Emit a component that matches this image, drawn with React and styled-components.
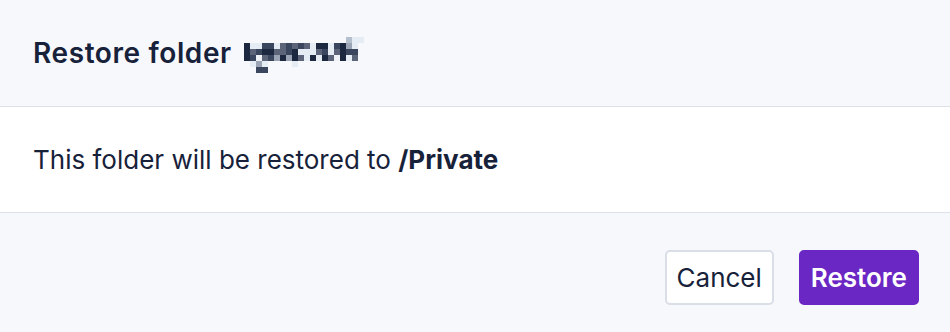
import React from "react";
import styled, { createGlobalStyle } from "styled-components";

const Global = createGlobalStyle`
  html, body { margin: 0; padding: 0; background: #ffffff; }
  body { font-family: Inter, "Noto Sans", sans-serif; color: #17223a; -webkit-font-smoothing: antialiased; }
`;

const Dialog = styled.div`
  width: 950px;
  height: 332px;
  display: flex;
  flex-direction: column;
  background: #f7f8fc;
`;

const Header = styled.header`
  height: 107px;
  box-sizing: border-box;
  padding: 0 33px;
  display: flex;
  align-items: center;
  gap: 12px;
  border-bottom: 1px solid #dde1ea;
  background: #f7f8fc;
`;

const Title = styled.h2`
  margin: 0;
  font-size: 28px;
  font-weight: 600;
  letter-spacing: 0.6px;
  color: #17223a;
`;

const Mosaic = styled.div`
  display: grid;
  grid-template-columns: repeat(21, 6px);
  grid-auto-rows: 6px;
  margin-top: 4px;
`;

const Cell = styled.span`
  background: ${(p) => p.$c};
`;

const Body = styled.section`
  height: 106px;
  box-sizing: border-box;
  padding: 0 33px;
  display: flex;
  align-items: center;
  background: #ffffff;
  border-bottom: 1px solid #dde1ea;
  font-size: 26px;
  color: #17223a;
`;

const Strong = styled.strong`
  font-weight: 700;
`;

const Footer = styled.footer`
  flex: 1;
  display: flex;
  justify-content: flex-end;
  align-items: flex-start;
  gap: 25px;
  padding: 37px 31px 0;
  background: #f7f8fc;
`;

const Button = styled.button`
  height: 55px;
  box-sizing: border-box;
  padding: 0 10px;
  border-radius: 5px;
  font-family: Inter, "Noto Sans", sans-serif;
  font-size: 26px;
  font-weight: ${(p) => (p.$primary ? 600 : 400)};
  border: 2px solid ${(p) => (p.$primary ? "#6b27c4" : "#d9dee7")};
  background: ${(p) => (p.$primary ? "#6b27c4" : "#ffffff")};
  color: ${(p) => (p.$primary ? "#ffffff" : "#17223a")};
  cursor: pointer;
`;

const L = "#e6ecf3";
const M = "#5b6479";
const D = "#1c2740";
const N = "#39465e";
const G = "#9aa4b4";
const _ = "transparent";

const grid = [
  [_, _, _, _, _, _, _, _, _, _, _, _, _, _, _, _, _, "#b4bfce", L, L, _],
  [D, L, L, N, N, L, M, N, M, N, M, L, D, D, L, N, D, G, L, _, _],
  [D, M, N, D, D, M, M, N, D, L, L, L, M, N, L, M, D, N, N, _, _],
  [D, N, "#eef1f6", M, N, G, D, G, D, M, L, D, L, D, M, "#eef1f6", D, L, M, _, _],
  [_, L, G, L, _, _, _, _, L, _, _, _, _, _, _, _, _, _, _, _, _],
  [_, _, N, N, _, _, _, _, _, _, _, _, _, _, _, _, _, _, _, _, _],
];

export default function App() {
  return (
    <>
      <Global />
      <Dialog>
        <Header>
          <Title>Restore folder</Title>
          <Mosaic aria-hidden="true">
            {grid.flat().map((c, i) => (
              <Cell key={i} $c={c} />
            ))}
          </Mosaic>
        </Header>
        <Body>
          <span>
            This folder will be restored to <Strong>/Private</Strong>
          </span>
        </Body>
        <Footer>
          <Button>Cancel</Button>
          <Button $primary>Restore</Button>
        </Footer>
      </Dialog>
    </>
  );
}
